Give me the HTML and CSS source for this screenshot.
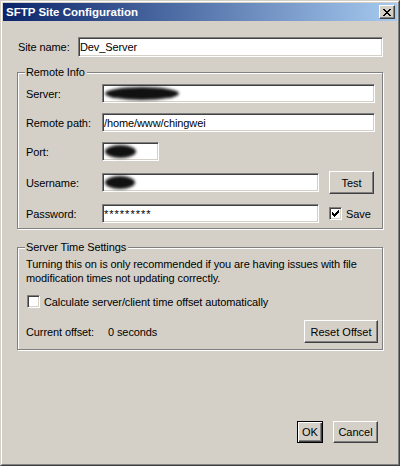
FILE: index.html
```html
<!DOCTYPE html>
<html lang="en">
<head>
    <meta charset="UTF-8">
    <title>SFTP Site Configuration</title>
    <link rel="stylesheet" href="styles.css">
</head>
<body>
    <div class="window">
        <div class="frame">
            <div class="titlebar">
                <span class="title">SFTP Site Configuration</span>
                <button class="close-btn" title="Close">
                    <svg width="8" height="7" viewBox="0 0 8 7" shape-rendering="crispEdges">
                        <path d="M0 0h2v1H0z M6 0h2v1H6z M1 1h2v1H1z M5 1h2v1H5z M2 2h4v1H2z M3 3h2v1H3z M2 4h4v1H2z M1 5h2v1H1z M5 5h2v1H5z M0 6h2v1H0z M6 6h2v1H6z" fill="#000"/>
                    </svg>
                </button>
            </div>

            <div class="content">
                <div class="site-row">
                    <label class="site-label" for="siteName">Site name:</label>
                    <input class="field" type="text" id="siteName" value="Dev_Server">
                </div>

                <fieldset class="group">
                    <legend>Remote Info</legend>
                    <div class="row">
                        <label class="row-label">Server:</label>
                        <div class="field fill"><span class="redacted server"></span></div>
                    </div>
                    <div class="row">
                        <label class="row-label" for="remotePath">Remote path:</label>
                        <input class="field fill" type="text" id="remotePath" value="/home/www/chingwei">
                    </div>
                    <div class="row">
                        <label class="row-label">Port:</label>
                        <div class="field port"><span class="redacted short"></span></div>
                    </div>
                    <div class="row">
                        <label class="row-label">Username:</label>
                        <div class="field half"><span class="redacted user"></span></div>
                        <button class="btn test-btn">Test</button>
                    </div>
                    <div class="row">
                        <label class="row-label" for="password">Password:</label>
                        <input class="field half password" type="text" id="password" value="*********">
                        <span class="check-wrap save">
                            <span class="check">
                                <svg width="7" height="7" viewBox="0 0 7 7" shape-rendering="crispEdges">
                                    <path d="M0 2h1v3H0z M1 3h1v3H1z M2 4h1v3H2z M3 3h1v3H3z M4 2h1v3H4z M5 1h1v3H5z M6 0h1v3H6z" fill="#000"/>
                                </svg>
                            </span>
                            Save
                        </span>
                    </div>
                </fieldset>

                <fieldset class="group time-group">
                    <legend>Server Time Settings</legend>
                    <p class="note">Turning this on is only recommended if you are having issues with file modification times not updating correctly.</p>
                    <div class="check-wrap auto-row">
                        <span class="check"></span>
                        Calculate server/client time offset automatically
                    </div>
                    <div class="offset-row">
                        <span class="offset-label">Current offset:</span>
                        <span class="offset-value">0 seconds</span>
                        <button class="btn reset-btn">Reset Offset</button>
                    </div>
                </fieldset>

                <div class="footer">
                    <button class="btn btn-default ok-btn">OK</button>
                    <button class="btn cancel-btn">Cancel</button>
                </div>
            </div>
        </div>
    </div>
</body>
</html>
```

FILE: styles.css
```css
* {
    box-sizing: border-box;
}

body {
    margin: 0;
    background: #d4d0c8;
    font-family: "Liberation Sans", Arial, sans-serif;
    font-size: 11px;
    letter-spacing: -0.1px;
    color: #000;
}

/* Classic window frame */
.window {
    width: 400px;
    height: 466px;
    background: #d4d0c8;
    border: 1px solid;
    border-color: #d4d0c8 #404040 #404040 #d4d0c8;
    display: flex;
}

.frame {
    flex: 1;
    border: 1px solid;
    border-color: #fff #808080 #808080 #fff;
    padding: 1px;
    display: flex;
    flex-direction: column;
}

.titlebar {
    height: 18px;
    background: linear-gradient(90deg, #0a246a 0%, #a6caf0 100%);
    display: flex;
    align-items: center;
    justify-content: space-between;
    padding: 0 2px 0 3px;
}

.title {
    color: #fff;
    font-weight: bold;
    font-size: 11.5px;
    letter-spacing: 0;
}

.close-btn {
    width: 16px;
    height: 14px;
    padding: 0;
    background: #d4d0c8;
    border: 1px solid;
    border-color: #fff #404040 #404040 #fff;
    box-shadow: inset -1px -1px #808080;
    display: flex;
    align-items: center;
    justify-content: center;
}

.content {
    flex: 1;
    padding: 16px 14px 0 14px;
    display: flex;
    flex-direction: column;
}

/* Text fields */
.field {
    height: 19px;
    border: 1px solid;
    border-color: #808080 #fff #fff #808080;
    box-shadow: inset 1px 1px #404040, inset -1px -1px #d4d0c8;
    background: #fff;
    padding: 0 1px;
    font: inherit;
    font-size: 11px;
    letter-spacing: -0.1px;
    color: #000;
    display: flex;
    align-items: center;
    outline: none;
}

.field.password {
    letter-spacing: 1px;
}

.site-row {
    display: flex;
    align-items: center;
}

.site-label {
    width: 61px;
    padding-left: 1px;
}

.site-row .field {
    flex: 1;
    height: 20px;
}

/* Group boxes */
.group {
    margin: 9px 0 0;
    padding: 6px 7px 5px 8px;
    border: 1px solid #808080;
    box-shadow: inset 1px 1px #fff, 1px 1px #fff;
    min-width: 0;
}

.group legend {
    margin-left: -1px;
    padding: 0 2px 0 1px;
    background: #d4d0c8;
}

.row {
    display: flex;
    align-items: center;
}

.row + .row {
    margin-top: 10px;
}

.row-label {
    width: 76px;
    flex-shrink: 0;
}

.fill {
    flex: 1;
}

.port {
    width: 57px;
}

.half {
    width: 217px;
}

.redacted {
    display: inline-block;
    height: 13px;
    margin-left: 1px;
    background: #111;
    border-radius: 50%;
    filter: blur(1.8px);
}

.redacted.server { width: 74px; }
.redacted.short { width: 31px; }
.redacted.user { width: 30px; }

/* Buttons */
.btn {
    font: inherit;
    font-size: 11px;
    color: #000;
    background: #d4d0c8;
    border: 1px solid;
    border-color: #fff #404040 #404040 #fff;
    box-shadow: inset -1px -1px #808080;
    padding: 0;
    height: 23px;
}

.btn-default {
    border-color: #000;
    box-shadow: inset 1px 1px #fff, inset -1px -1px #404040, inset -2px -2px #808080;
}

.test-btn {
    width: 45px;
    margin-left: 10px;
}

/* Checkboxes */
.check-wrap {
    display: flex;
    align-items: center;
    gap: 4px;
}

.check {
    width: 13px;
    height: 13px;
    border: 1px solid;
    border-color: #808080 #fff #fff #808080;
    box-shadow: inset 1px 1px #404040, inset -1px -1px #d4d0c8;
    background: #fff;
    display: flex;
    align-items: center;
    justify-content: center;
}

.save {
    margin-left: 10px;
}

.time-group {
    margin-top: 12px;
    padding: 4px 4px 6px 8px;
}

.note {
    margin: 0;
    line-height: 14px;
    padding-right: 10px;
}

.auto-row {
    margin-top: 10px;
    padding-left: 1px;
}

.offset-row {
    display: flex;
    align-items: center;
    margin-top: 12px;
}

.offset-label {
    width: 82px;
}

.reset-btn {
    width: 74px;
    margin-left: auto;
}

/* Dialog buttons */
.footer {
    margin-top: auto;
    margin-bottom: 20px;
    margin-right: 5px;
    display: flex;
    justify-content: flex-end;
    gap: 10px;
}

.ok-btn {
    width: 26px;
    height: 22px;
}

.cancel-btn {
    width: 45px;
    height: 22px;
}
```
